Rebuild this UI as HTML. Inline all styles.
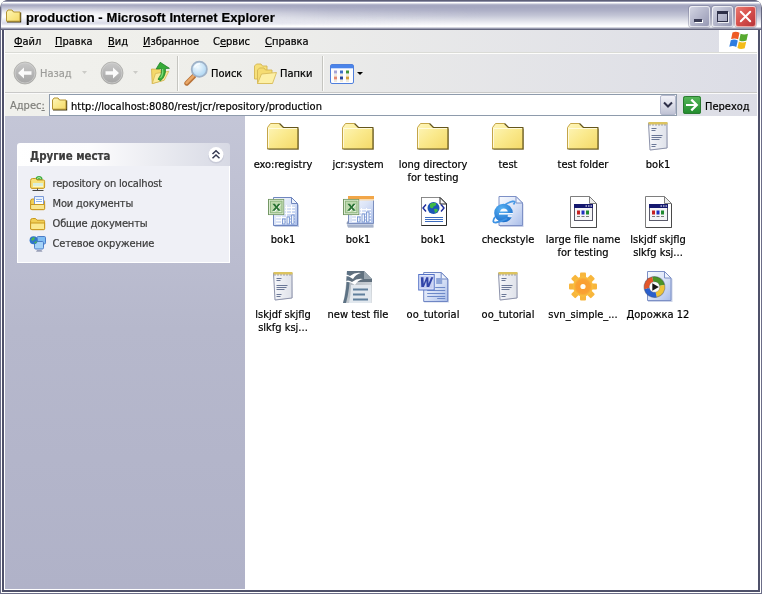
<!DOCTYPE html>
<html><head><meta charset="utf-8">
<style>
*{box-sizing:border-box;margin:0;padding:0}
html,body{width:762px;height:594px;overflow:hidden;background:#fff}
body{font-family:"DejaVu Sans Condensed","DejaVu Sans","Liberation Sans",sans-serif;font-size:11px;color:#000;position:relative;-webkit-text-stroke:.2px}
#win{will-change:transform;position:absolute;left:0;top:0;width:762px;height:594px;background:#efefea;border-radius:8px 8px 0 0;overflow:hidden}
#win>*,#tbar>*{position:absolute}
#tbar{left:0;top:0;width:762px;height:30px;z-index:6}
#title{left:0;top:0;width:762px;height:30px;border-radius:7px 7px 0 0;background:#64667e}
#tin{position:absolute;left:1px;top:0;width:760px;height:30px;border-radius:6px 6px 0 0;
 background:linear-gradient(to bottom,#5d5f78 0,#5d5f78 1px,#9092aa 1px,#9092aa 2px,#fff 2px,#fff 3px,#dcdde7 3px,#dcdde7 4px,#bbbdd0 4px,#a6a8c1 5.5px,#a5a7c0 7px,#aeb0c7 10.5px,#c3c5d6 15.5px,#dfe0e9 20.5px,#f6f6fa 24.5px,#fff 26px,#fff 27px,#d4d5df 27px,#d4d5df 28px,#9a9cb0 28px,#9a9cb0 29px,#64667e 29px)}
#tfade{left:2px;top:4px;width:520px;height:23px;background:linear-gradient(to right,rgba(255,255,255,.95) 0,rgba(255,255,255,.9) 90px,rgba(255,255,255,.55) 200px,rgba(255,255,255,.15) 330px,rgba(255,255,255,0) 480px);-webkit-mask-image:linear-gradient(to bottom,transparent 0,transparent 1px,rgba(0,0,0,.35) 4px,rgba(0,0,0,.8) 8px,#000 11px,#000 100%);mask-image:linear-gradient(to bottom,transparent 0,transparent 1px,rgba(0,0,0,.35) 4px,rgba(0,0,0,.8) 8px,#000 11px,#000 100%)}
#tfade2{left:2px;top:17px;width:420px;height:9px;background:linear-gradient(to bottom,rgba(205,207,225,0) 0,rgba(205,207,225,.75) 6px,rgba(205,207,225,.6) 7px,rgba(255,255,255,0) 9px);-webkit-mask-image:linear-gradient(to right,#000 0,#000 120px,transparent 100%);mask-image:linear-gradient(to right,#000 0,#000 120px,transparent 100%)}
#ttext{left:26px;top:10px;font-family:"Liberation Sans",sans-serif;font-weight:bold;font-size:13px;white-space:nowrap;line-height:15px;letter-spacing:.08px}
.tb{width:21px;height:21px;top:6px;border-radius:3px;border:1px solid rgba(255,255,255,.8);border-right-color:rgba(255,255,255,.45);border-bottom-color:rgba(255,255,255,.45);box-shadow:0 0 0 1px rgba(110,112,140,.4)}
#frame{z-index:5;pointer-events:none;left:0;top:20px;width:762px;height:574px;box-shadow:inset 0 0 0 1px #6c6e88,inset 0 0 0 2px #fff,inset 0 0 0 4px #4f516a,inset 0 0 0 5px #fff}
#menu{left:5px;top:30px;width:752px;height:22px;background:linear-gradient(to right,#f0f0ec 0,#efefeb 30%,#dcdde6 100%)}
#menu span{position:absolute;top:5px;white-space:nowrap}
#flag{left:719px;top:30px;width:38px;height:22px;background:#fff}
#msep{left:5px;top:52px;width:752px;height:2px;background:linear-gradient(to bottom,#dadbd6 0,#dadbd6 1px,#fdfdfb 1px)}
#tool{left:5px;top:54px;width:752px;height:38px;background:linear-gradient(to right,#f1f1ed 0,#eeeeea 30%,#dcdde6 100%)}
#tsep{left:5px;top:92px;width:752px;height:2px;background:linear-gradient(to bottom,#c9c9c8 0,#c9c9c8 1px,#fafafa 1px)}
#addr{left:5px;top:94px;width:752px;height:22px;background:linear-gradient(to right,#f0f0ec 0,#efefeb 30%,#dcdde6 100%)}
.vsep{width:2px;top:56px;height:35px;background:linear-gradient(to right,#c5c5c0 0,#c5c5c0 1px,#fbfbf9 1px)}
.tl{white-space:nowrap;line-height:13px}
#abox{left:49px;top:94px;width:628px;height:22px;background:#fff;border:1px solid #8e9bac}
#left{left:5px;top:116px;width:240px;height:473px;background:linear-gradient(to bottom,#c4c6d7 0,#b6b8cc 45%,#b0b2c8 100%)}
#right{left:245px;top:116px;width:512px;height:473px;background:#fff}
#phead{left:17px;top:143px;width:213px;height:23px;border-radius:3px 3px 0 0;background:linear-gradient(to right,#fff 0,#fcfcfd 35%,#d7d9e4 100%)}
#pbody{left:17px;top:166px;width:213px;height:97px;background:#eff0f6;border:1px solid #fff;border-top:none}
.pl{letter-spacing:-.15px;left:52.5px;color:#3c3c3c;white-space:nowrap;line-height:13px}
.lab{width:90px;text-align:center;line-height:13px}
.ic{width:32px;height:32px;overflow:visible}
.sic{width:16px;height:16px;overflow:visible}
</style></head><body>
<div id="win">
<svg width="0" height="0" style="position:absolute">
<defs>
<linearGradient id="gF" x1="0" y1="0" x2="1" y2="1"><stop offset="0" stop-color="#fef6bd"/><stop offset=".5" stop-color="#fae98c"/><stop offset="1" stop-color="#f4d968"/></linearGradient>
<linearGradient id="gP" x1="0" y1="0" x2="1" y2="1"><stop offset="0" stop-color="#f8fafe"/><stop offset=".5" stop-color="#dbe4f7"/><stop offset="1" stop-color="#a9bde9"/></linearGradient>
<linearGradient id="gN" x1="0" y1="0" x2="1" y2="0"><stop offset="0" stop-color="#f6f7fa"/><stop offset="1" stop-color="#dfe2ea"/></linearGradient>
<linearGradient id="gGr" x1="0" y1="0" x2="0" y2="1"><stop offset="0" stop-color="#c9c9c9"/><stop offset="1" stop-color="#a4a4a4"/></linearGradient>
<linearGradient id="gGo" x1="0" y1="0" x2="0" y2="1"><stop offset="0" stop-color="#58b85a"/><stop offset="1" stop-color="#1f8a2c"/></linearGradient>
<radialGradient id="gGear" cx=".5" cy=".5" r=".5"><stop offset="0" stop-color="#fb9a2c"/><stop offset=".7" stop-color="#f9a233"/><stop offset="1" stop-color="#f8c543"/></radialGradient>
<linearGradient id="gOO" x1="0" y1="0" x2="1" y2="1"><stop offset="0" stop-color="#a2abb4"/><stop offset="1" stop-color="#dde1e5"/></linearGradient>
<radialGradient id="gLens" cx=".4" cy=".35" r=".7"><stop offset="0" stop-color="#f2fafe"/><stop offset="1" stop-color="#a9d3f2"/></radialGradient>
<radialGradient id="gIE" cx=".4" cy=".3" r=".8"><stop offset="0" stop-color="#5ab4f4"/><stop offset="1" stop-color="#1668c8"/></radialGradient>

<symbol id="folder" viewBox="0 0 32 32">
 <path d="M2,8 L5,4 L13,4 L17,8 L32,8 L32,29.100 L2,29.100 Z" fill="#8a7a3a" opacity=".45"/>
 <path d="M.5,6.500 L3.500,2.500 L12.500,2.500 L16.500,6.500 L31,6.500 L31,28 L.5,28 Z" fill="url(#gF)"/>
 <path d="M.5,28 L.5,6.500 L3.500,2.500 L12.500,2.500" fill="none" stroke="#c4a548" stroke-width="1"/>
 <path d="M1.500,26.500 L1.500,7.500 L16,7.500 L30,7.500" fill="none" stroke="#fffce6" stroke-width="1" opacity=".85"/>
 <path d="M12.500,2.500 L16.500,6.500 L31,6.500 L31,28 L.5,28" fill="none" stroke="#65561c" stroke-width="1.200" stroke-linejoin="round"/>
</symbol>

<symbol id="note" viewBox="0 0 32 32">
 <g transform="translate(-6.500 0)">
 <path d="M14,2.500 L32.500,2.500 L33.500,27 L16,29.500 Z" fill="#b9bccb" opacity=".55" transform="translate(-1,0)"/>
 <path d="M13.500,2 L32,2 L32,27 L15,29 Z" fill="url(#gN)" stroke="#8d93ab" stroke-width="1" transform="translate(-0.5,0)"/>
 <path d="M13,1 L32,1 L32,3.500 L13,3.500 Z" fill="#dcc35f"/>
 <path d="M14,4 h17" stroke="#5c5f76" stroke-width="1" stroke-dasharray="1 2"/>
 <g stroke="#6a7796" stroke-width="1">
  <path d="M16,7.500h5 M16,9.500h4 M16,14.500h11 M16,16.500h10 M16,18.500h8 M16,23.500h5 M16,25.500h4"/>
 </g>
 </g>
</symbol>

<symbol id="xbox" viewBox="0 0 17 17">
 <rect x=".5" y=".5" width="16" height="16" fill="#e4f0dc" stroke="#6f9460"/>
 <rect x="2" y="2" width="13" height="13" fill="#bedaae"/>
 <rect x="2.500" y="2.500" width="12" height="12" fill="none" stroke="#8fb680"/>
 <path d="M4.500,5.200 h2.800 l1.500,2.200 l1.700,-2.200 h2.600 l-3,3.500 l3.200,3.700 h-2.800 l-1.700,-2.300 l-1.800,2.300 h-2.700 l3.200,-3.700 z" fill="#fff" transform="translate(.7,.7)"/>
 <path d="M4.500,5.200 h2.800 l1.500,2.200 l1.700,-2.200 h2.600 l-3,3.500 l3.200,3.700 h-2.800 l-1.700,-2.300 l-1.800,2.300 h-2.700 l3.200,-3.700 z" fill="#2a7434"/>
</symbol>

<symbol id="xls" viewBox="0 0 32 32">
 <path d="M7.5,2 L25,2 L32,9 L32,31 L7.5,31 Z" fill="#8fa3cf" opacity=".5"/>
 <path d="M6.5,1.5 L24.5,1.5 L30.5,7.5 L30.5,29.5 L6.5,29.5 Z" fill="url(#gP)" stroke="#6f86bf"/>
 <path d="M24.5,1.5 L24.5,7.5 L30.5,7.5 Z" fill="#eef3fc" stroke="#6f86bf" stroke-linejoin="round"/>
 <g stroke="#fff" stroke-width="1" opacity=".95"><path d="M9,21.5h19 M9,24.5h19 M9,27.5h19 M18,11.5h10 M18,14.5h10 M18,17.5h10 M14.5,20v8 M19.5,9v19 M24.5,9v19"/></g>
 <g fill="#eef3fc" stroke="#6d8ccc" stroke-width=".8"><rect x="15.500" y="23" width="2.500" height="5"/><rect x="20" y="21" width="2.500" height="7"/><rect x="24.500" y="19" width="2.500" height="9"/></g>
 <use href="#xbox" x="1" y="2.800" width="16.400" height="16.400"/>
</symbol>

<symbol id="xlt" viewBox="0 0 32 32">
 <path d="M4.5,27 L7,23 L31,23 L31.5,31.5 L6,31.5 Z" fill="#8d9bb8"/>
 <path d="M5,28.5 h26 M5.5,30 h25.5" stroke="#cfd8ea" stroke-width=".8"/>
 <path d="M6.5,.5 L31.5,.5 L31.5,27.5 L6.5,27.5 Z" fill="url(#gP)" stroke="#7c8fbe"/>
 <rect x="6" y="0" width="26" height="3" fill="#f2a648"/>
 <rect x="6" y="3" width="26" height="1.500" fill="#f9dcb0"/>
 <g stroke="#fff" stroke-width="1" opacity=".95"><path d="M10,19.5h19 M10,22.5h19 M10,25.5h19 M18,13.5h11 M18,16.5h11 M14.500,19v7 M19.5,12v14 M24.5,12v14"/></g>
 <g fill="#eef3fc" stroke="#6d8ccc" stroke-width=".8"><rect x="15.500" y="21" width="2.500" height="5"/><rect x="20" y="18" width="2.500" height="8"/><rect x="24.500" y="16" width="2.500" height="10"/></g>
 <use href="#xbox" x="1" y="2.800" width="16.400" height="16.400"/>
</symbol>

<symbol id="xml" viewBox="0 0 32 32">
 <path d="M4.500,1.500 L23,1.500 L29.500,8 L29.500,29.500 L4.500,29.500 Z" fill="#fff" stroke="#2a2a2a"/>
 <path d="M4.500,29 L4.500,1.500 L23,1.500" fill="none" stroke="#8a8a8a"/>
 <path d="M23,1.500 L23,8 L29.500,8 Z" fill="#f2f2f2" stroke="#2a2a2a" stroke-linejoin="round"/>
 <circle cx="16.500" cy="12" r="6" fill="#1c56b8"/>
 <path d="M13,8 q3,-2 6,-1 q1,2 -1,3 q-2,0 -2,2 q-2,1 -3,-1 z M17,13 q3,-1 4,1 q-1,3 -3,3 z" fill="#3fb846"/>
 <path d="M9,8.500 L6,12 L9,15.500 M24,8.500 L27,12 L24,15.500" fill="none" stroke="#1c2a9a" stroke-width="1.400"/>
 <path d="M8,21.500h18 M8,23.500h18 M8,25.500h18" stroke="#3d6dc0" stroke-width="1"/>
</symbol>

<symbol id="iedoc" viewBox="0 0 32 32">
 <path d="M8,1.500 L25,1.500 L31.500,8 L31.500,31 L8,31 Z" fill="#8fa0cf" opacity=".5"/>
 <path d="M7,.5 L24,.5 L30.500,7 L30.500,29.500 L7,29.500 Z" fill="url(#gP)" stroke="#7d90c6"/>
 <path d="M24,.5 L24,7 L30.500,7 Z" fill="#eef3fc" stroke="#7d90c6" stroke-linejoin="round"/>
 <path d="M21.500,8.500 Q24.500,4.500 20,5.500 Q16,6.500 12,9.500" fill="none" stroke="#4a9ae6" stroke-width="1.800"/>
 <circle cx="11.500" cy="17" r="9.300" fill="url(#gIE)"/>
 <path d="M8,15.600 Q8.800,12.600 11.800,12.600 Q15,12.600 15.800,15.600 Z" fill="#f4f9fe"/>
 <path d="M7,17 H21 V18.600 H7 Z" fill="#f4f9fe"/>
 <path d="M16,18.600 H21 Q20.600,20.400 19.800,21.600 L15.500,20.800 Z" fill="#dfeafb"/>
 <path d="M3,21 Q-1,27 4,26.500 Q9,26 15,22.500" fill="none" stroke="#3f93e4" stroke-width="1.800"/>
</symbol>

<symbol id="gen" viewBox="0 0 32 32">
 <path d="M3.500,.5 L22.500,.5 L29.500,7.500 L29.500,31.500 L3.500,31.500 Z" fill="#fff" stroke="#7e7e7e"/>
 <path d="M29.500,8 L29.500,31.500 L4,31.500" fill="none" stroke="#4a4a4a"/>
 <path d="M22.500,.5 L22.500,7.500 L29.500,7.500 Z" fill="#ececec" stroke="#7e7e7e" stroke-linejoin="round"/>
 <rect x="7.500" y="8.500" width="18" height="16" fill="#f4f4f6" stroke="#5a5a6a"/>
 <rect x="7" y="8" width="19" height="4" fill="#14186e"/>
 <path d="M18.500,10h1.500 M21,10h1.500 M23.500,10h1.500" stroke="#fff" stroke-width="1.200"/>
 <rect x="10" y="14.500" width="3" height="4" fill="#c62020"/><rect x="14.500" y="14.500" width="3" height="4" fill="#2030c0"/><rect x="19" y="14.500" width="3" height="4" fill="#208a30"/>
 <path d="M10,20.500h3 M14.500,20.500h3 M19,20.500h3" stroke="#7a7a7a"/>
</symbol>

<symbol id="oo" viewBox="0 0 32 32">
 <path d="M5,0 L22,0 L30,8 L30,32 L1,32 Q4,20 5,0 Z" fill="url(#gOO)"/>
 <path d="M5,0 L22,0 L30,8 L30,11 L4.500,11 Z" fill="#60707e"/>
 <path d="M22,0 L30,8 L22,8 Z" fill="#9aa6b0"/>
 <path d="M5,0 Q5,20 1,32 L4,32 Q8,18 8,0 Z" fill="#5d7284"/>
 <path d="M9,14 L29,14 L29,32 L7,32 Q9,24 9,14 Z" fill="#e2e8ee"/>
 <path d="M0,5 q4,-3 8,0 q5,-4 11,-3 q-5,1 -8,6 q-5,-4 -11,-3 z M2,11 q4,-3 8,0 q5,-4 11,-3 q-5,1 -8,6 q-5,-4 -11,-3 z" fill="#fff"/>
 <path d="M11,18.500h15 M11,23.500h12 M11,28.500h15" stroke="#5f7f9c" stroke-width="2"/>
</symbol>

<symbol id="doc" viewBox="0 0 32 32">
 <g transform="translate(-.8 0)">
 <path d="M8,2 L26,2 L33,9 L33,31.500 L8,31.500 Z" fill="#8fa0cf" opacity=".45"/>
 <path d="M7.500,1.500 L25,1.500 L31.500,8 L31.500,30.500 L7.500,30.500 Z" fill="url(#gP)" stroke="#6f86c4"/>
 <path d="M25,1.500 L25,8 L31.500,8 Z" fill="#eef3fc" stroke="#6f86c4" stroke-linejoin="round"/>
 <rect x="20" y="7" width="6" height="6" fill="#8ea5d8"/>
 <g stroke="#6d89c8" stroke-width="1"><path d="M19,16.500h10 M11,19.500h18 M11,22.500h18 M11,25.500h18 M21,27.500h8"/></g>
 <rect x="2.500" y="3.500" width="15.500" height="15.500" fill="#e2e7fa" stroke="#5674c8"/>
 <rect x="4" y="5" width="12.500" height="12.500" fill="#c6cff2"/>
 <path d="M4.500,6.500 h3 l.3,7 l3,-7 h2.400 l.2,7 l3,-7 h2.600 l-4.800,10.500 h-3 l-.3,-6.500 l-2.900,6.500 h-3 z" fill="#3144a8" transform="translate(.8,.3) scale(.86 .92)"/>
 </g>
</symbol>

<symbol id="gear" viewBox="0 0 32 32">
 <g transform="translate(16 15.500)">
  <g fill="#f8b63c"><rect x="-3" y="-14" width="6" height="28" rx="1"/><rect x="-3" y="-14" width="6" height="28" rx="1" transform="rotate(45)"/><rect x="-3" y="-14" width="6" height="28" rx="1" transform="rotate(90)"/><rect x="-3" y="-14" width="6" height="28" rx="1" transform="rotate(135)"/></g>
  <circle r="10" fill="url(#gGear)"/>
  <circle r="2.600" fill="#fffdf4"/>
 </g>
</symbol>

<symbol id="wmp" viewBox="0 0 32 32">
 <path d="M6,1.500 L23.500,1.500 L30.500,8 L30.500,31 L6,31 Z" fill="#8fa0cf" opacity=".45"/>
 <path d="M5.500,.5 L22.500,.5 L29,7 L29,29.500 L5.500,29.500 Z" fill="url(#gP)" stroke="#7d90c6"/>
 <path d="M22.500,.5 L22.500,7 L29,7 Z" fill="#eef3fc" stroke="#7d90c6" stroke-linejoin="round"/>
 <g transform="translate(12.500 16) rotate(-12)">
  <path d="M0,0 L-10.500,0 A10.500,10.500 0 0 1 0,-10.500 Z" fill="#e4572a"/>
  <path d="M0,0 L0,-10.500 A10.500,10.500 0 0 1 10.500,0 Z" fill="#4c9427"/>
  <path d="M0,0 L10.500,0 A10.500,10.500 0 0 1 0,10.500 Z" fill="#eec437"/>
  <path d="M0,0 L0,10.500 A10.500,10.500 0 0 1 -10.500,0 Z" fill="#2a5fcc"/>
  <circle r="10.500" fill="none" stroke="#26324a" stroke-opacity=".35" stroke-width="1"/>
  <circle r="5.300" fill="#fbfbfb" stroke="#26324a" stroke-opacity=".3" stroke-width=".8"/>
 </g>
 <path d="M10.300,12.200 L16.800,16 L10.300,19.800 Z" fill="#151515"/>
</symbol>

<symbol id="sfolder" viewBox="0 0 16 16">
 <path d="M1,4.500 L2.500,2.500 L6.500,2.500 L8,4.500 L15.200,4.500 L15.200,14.400 L1,14.400 Z" fill="#3a3210"/>
 <path d="M.5,4 L2,2 L6,2 L7.500,4 L14,4 L14,13.200 L.5,13.200 Z" fill="url(#gF)" stroke="#b59535" stroke-width="1"/>
</symbol>
</defs>
</svg>
<div id="frame"></div><div id="tbar"><div id="title"><div id="tin"></div></div><div id="tfade"></div><div id="tfade2"></div>
<svg class="sic" style="left:6px;top:8px" width="16" height="16"><use href="#sfolder" width="16" height="16"/></svg>
<div id="ttext">production - Microsoft Internet Explorer</div>
<div class="tb" style="left:689px;background:linear-gradient(135deg,#d2d4e2 0,#b4b6cb 50%,#9799b4 100%)"></div>
<div style="left:694px;top:19px;width:8px;height:3px;background:#3a3c55;box-shadow:1px 1px 0 #fff"></div>
<div class="tb" style="left:712px;background:linear-gradient(135deg,#d2d4e2 0,#b4b6cb 50%,#9799b4 100%)"></div>
<div style="left:717px;top:11px;width:11px;height:11px;border:1px solid #2e3048;border-top-width:3px;box-shadow:1px 1px 0 rgba(255,255,255,.8)"></div>
<div class="tb" style="left:735px;background:linear-gradient(135deg,#e87b72 0,#d9524d 45%,#b8353a 100%)"></div>
<svg style="left:735px;top:6px" width="21" height="21"><path d="M5.800,5.800 L15.200,15.200 M15.200,5.800 L5.800,15.200" stroke="#fff" stroke-width="2" stroke-linecap="round"/></svg></div>
<div id="menu"><span style="left:9px"><u>Ф</u>айл</span><span style="left:50px"><u>П</u>равка</span><span style="left:103px"><u>В</u>ид</span><span style="left:138px"><u>И</u>збранное</span><span style="left:208px">С<u>е</u>рвис</span><span style="left:260px"><u>С</u>правка</span></div>
<div id="flag"></div>
<svg style="left:727px;top:31px" width="24" height="20" viewBox="0 0 24 20"><path d="M5.500,1.500 q3.500,-1.500 7,.3 l-1.400,6.500 q-3.500,-1.700 -7,-.2 z" fill="#ee5a24"/><path d="M13.600,2.800 q3.500,1.600 7.400,0 l-1.500,6.800 q-3.700,1.500 -7.300,-.2 z" fill="#57a92f"/><path d="M3.800,9.200 q3.500,-1.500 7,.3 l-1.500,6.500 q-3.400,-1.700 -7,-.2 z" fill="#2f7de0"/><path d="M11.900,10.500 q3.500,1.700 7.300,.2 l-1.500,6.600 q-3.800,1.500 -7.300,-.2 z" fill="#f5bc19"/></svg>
<div id="msep"></div><div id="tool"></div><div id="tsep"></div><div id="addr"></div>
<svg style="left:13px;top:61px" width="24" height="24" viewBox="0 0 24 24"><circle cx="12" cy="12" r="11" fill="url(#gGr)" stroke="#a8a8a5" stroke-width=".9" stroke-opacity=".8"/><circle cx="12" cy="12" r="10" fill="none" stroke="#d2d2d0" stroke-width="1" stroke-opacity=".7"/><path d="M5,12 L11,6.500 L11,10.300 L18.500,10.300 L18.500,13.700 L11,13.700 L11,17.500 Z" fill="#fbfbfb"/></svg>
<div class="tl" style="left:40px;top:67px;color:#9d9d9a">Назад</div>
<svg style="left:82px;top:71px" width="5" height="3"><path d="M0,0h5L2.500,3z" fill="#cbcbc7"/></svg>
<svg style="left:100px;top:61px" width="24" height="24" viewBox="0 0 24 24"><circle cx="12" cy="12" r="11" fill="url(#gGr)" stroke="#a8a8a5" stroke-width=".9" stroke-opacity=".8"/><circle cx="12" cy="12" r="10" fill="none" stroke="#d2d2d0" stroke-width="1" stroke-opacity=".7"/><path d="M19,12 L13,6.500 L13,10.300 L5.500,10.300 L5.500,13.700 L13,13.700 L13,17.500 Z" fill="#fbfbfb"/></svg>
<svg style="left:133px;top:71px" width="5" height="3"><path d="M0,0h5L2.500,3z" fill="#cbcbc7"/></svg>
<svg style="left:149px;top:60px" width="24" height="26" viewBox="0 0 24 26"><path d="M2.500,9 L10.500,9.300 L12.500,11 L16,11.200 L15,20 L3.200,23.600 Z" fill="#f4d86a" stroke="#d0ae48" stroke-width=".8"/><path d="M3.200,23.600 L6.500,13.500 L19.800,11.300 L15.200,20.300 Z" fill="#fbeb9c" stroke="#d6b854" stroke-width=".8"/><path d="M11.200,2.300 L20.400,8.300 L16.400,8.500 Q17.200,15.800 11.600,20.800 L9,19.200 Q13.400,14.400 12.600,8.700 L7.200,8.900 Z" fill="#36ab38" stroke="#1e8128" stroke-width=".8" stroke-linejoin="round"/><path d="M13.500,9 Q14.500,14 11.500,18" fill="none" stroke="#7fdc78" stroke-width="1.200"/></svg>
<div class="vsep" style="left:177px"></div>
<svg style="left:183px;top:60px" width="26" height="26" viewBox="0 0 26 26"><path d="M10.500,16.500 L3.800,23.200" stroke="#b9743a" stroke-width="5" stroke-linecap="round"/><path d="M10.300,16.200 L3.600,22.900" stroke="#eaa868" stroke-width="2.600" stroke-linecap="round"/><circle cx="16.300" cy="9.200" r="7.600" fill="url(#gLens)" stroke="#9fb2c8" stroke-width="1.800"/><path d="M11.500,7.500 Q13,4 17,3.800" fill="none" stroke="#fff" stroke-width="1.600" opacity=".8"/></svg>
<div class="tl" style="left:211px;top:67px">Поиск</div>
<svg style="left:253px;top:62px" width="25" height="24" viewBox="0 0 25 24"><path d="M1.500,4 L3.500,2 L8,2 L9.500,4 L14,4 L14,17 L1.500,17 Z" fill="#f6e07a" stroke="#d4b654" stroke-width=".9"/><path d="M4.500,21.500 L4.500,8 L6.500,6 L11,6 L12.500,8 L19,8 L19,21.500 Z" fill="#f5dc72" stroke="#d4b654" stroke-width=".9"/><path d="M4.500,21.500 L8.500,12 L23.500,10.500 L19.500,21.500 Z" fill="#fdf0a6" stroke="#d8bc5c" stroke-width=".9"/></svg>
<div class="tl" style="left:280px;top:67px">Папки</div>
<div class="vsep" style="left:322px"></div>
<svg style="left:330px;top:64px" width="24" height="20" viewBox="0 0 24 20"><rect x=".5" y=".5" width="23" height="19" rx="1.500" fill="#fdfdfe" stroke="#4f7fdc"/><path d="M1,1 h22 v3.300 h-22 z" fill="#4a84ea"/><rect x="4" y="6.500" width="3" height="3" fill="#a6a4d6"/><rect x="10" y="6.500" width="3" height="3" fill="#3f70c8"/><rect x="16" y="6.500" width="3" height="3" fill="#3f943c"/><rect x="4" y="12.500" width="3" height="3" fill="#e38a72"/><rect x="10" y="12.500" width="3" height="3" fill="#27459c"/><rect x="16" y="12.500" width="3" height="3" fill="#d6a23e"/><path d="M4,11h3 M10,11h3 M16,11h3 M4,17h3 M10,17h3 M16,17h3" stroke="#e2d6b8" stroke-width="1"/></svg>
<svg style="left:357px;top:72px" width="6" height="3"><path d="M0,0h6L3,3z" fill="#000"/></svg>
<div class="tl" style="left:10px;top:99px;color:#7f7f7b">Адрес<u>:</u></div>
<div id="abox"></div>
<svg class="sic" style="left:52px;top:96px" width="16" height="16"><use href="#sfolder" width="16" height="16"/></svg>
<div class="tl" style="left:71px;top:100px">http://localhost:8080/rest/jcr/repository/production</div>
<div style="left:660px;top:95px;width:16px;height:20px;border:1px solid #b4b8cc;border-radius:2px;background:linear-gradient(to bottom,#f2f2f8 0,#d6d8e4 60%,#bfc2d4 100%)"></div>
<svg style="left:663px;top:101px" width="10" height="8"><path d="M1,1.500 L5,5.500 L9,1.500" fill="none" stroke="#2e3048" stroke-width="2"/></svg>
<svg style="left:683px;top:96px" width="18" height="18" viewBox="0 0 18 18"><rect x="0" y="0" width="18" height="18" rx="2" fill="url(#gGo)"/><rect x=".5" y=".5" width="17" height="17" rx="2" fill="none" stroke="#2a7a30"/><path d="M3,9 h10 M8.300,3.600 L13.800,9 L8.300,14.400" fill="none" stroke="#fff" stroke-width="2.200"/></svg>
<div class="tl" style="left:705px;top:100px">Переход</div>
<div id="left"></div><div id="right"></div>
<div id="phead"></div><div id="pbody"></div>
<div class="tl" style="left:30px;top:150px;font-weight:bold;font-size:11.4px;color:#3c3c3c">Другие места</div>
<svg style="left:207px;top:146px" width="18" height="18" viewBox="0 0 18 18"><circle cx="9" cy="9.500" r="8" fill="#c9cbd8"/><circle cx="9" cy="8.500" r="7.500" fill="#fff"/><path d="M5.500,8 L9,4.800 L12.500,8 M5.500,12.300 L9,9 L12.500,12.300" fill="none" stroke="#363a52" stroke-width="1.500"/></svg>
<div class="pl" style="top:177px">repository on localhost</div>
<div class="pl" style="top:197px">Мои документы</div>
<div class="pl" style="top:217px">Общие документы</div>
<div class="pl" style="top:237px">Сетевое окружение</div>
<svg style="left:30px;top:175px" width="16" height="17" viewBox="0 0 16 17"><circle cx="9" cy="4.500" r="3.600" fill="#3fae42"/><path d="M7,3.500 q2,-2 4,0" stroke="#c4efb4" fill="none"/><path d="M.6,5.500 Q.6,3.500 2.500,3.500 L5.500,3.500 L7,5 L13.500,5 Q14.600,5 14.600,6.200 L14.600,12 Q14.600,13.400 13.300,13.400 L2,13.400 Q.6,13.400 .6,12 Z" fill="#f7e17a" stroke="#c8981f" stroke-linejoin="round"/><rect x="3" y="8" width="10" height="3" fill="#d9efe0"/><path d="M3,11.500h10" stroke="#fff6c0"/><path d="M7.500,13.500v1.500" stroke="#555"/><path d="M2.500,15.500h11" stroke="#444" stroke-width="1.200"/></svg>
<svg style="left:30px;top:195px" width="16" height="16" viewBox="0 0 16 16"><path d="M.6,6 Q.6,4 2.500,4 L5,4 L6,5.500 L13.500,5.500 Q14.600,5.500 14.600,6.500 L14.600,13.500 Q14.600,14.600 13.500,14.600 L1.800,14.600 Q.6,14.600 .6,13.500 Z" fill="#f1cf55" stroke="#c8981f" stroke-linejoin="round"/><path d="M4.500,1.500 h9 v10 h-9 z" fill="#fdfeff" stroke="#7c9ad6"/><path d="M6,4.500h6 M6,6.500h6" stroke="#8db4ee"/><path d="M5,3h8" stroke="#cfe0f8"/><path d="M.6,14 L.6,9.500 L14.600,9.500 L14.600,13.500 Q14.600,14.600 13.500,14.600 L1.800,14.600 Q.6,14.600 .6,13.500 Z" fill="#f9e690" stroke="#c8981f" stroke-linejoin="round"/></svg>
<svg style="left:30px;top:217px" width="16" height="14" viewBox="0 0 16 14"><path d="M.6,3.500 Q.6,1.500 2.500,1.500 L5.500,1.500 L7,3.200 L13.500,3.200 Q14.600,3.200 14.600,4.300 L14.600,11.500 Q14.600,12.600 13.500,12.600 L1.800,12.600 Q.6,12.600 .6,11.500 Z" fill="#f1cf55" stroke="#c8981f" stroke-linejoin="round"/><path d="M.6,12 L.6,6 L14.600,6 L14.600,11.500 Q14.600,12.600 13.500,12.600 L1.800,12.600 Q.6,12.600 .6,11.500 Z" fill="#fbe98f" stroke="#c8981f" stroke-linejoin="round"/></svg>
<svg style="left:29px;top:235px" width="18" height="18" viewBox="0 0 18 18"><rect x="8" y="1.500" width="8.500" height="7.500" rx="1.200" fill="#7fbdf2" stroke="#4a7cc8"/><rect x="5.500" y="6.500" width="9" height="7.500" rx="1.200" fill="#a4d2f8" stroke="#4a7cc8"/><path d="M8,15h4.500l1,1.800h-6.500z" fill="#9aa0b8"/><circle cx="4.600" cy="5.200" r="4" fill="#2f74cc"/><path d="M2,4.500 q1.500,-3 4,-2 q0,2 -2.500,3.500 z M5,7.500 q2,-.5 2.500,-2 q1,2 -1,3.200 z" fill="#4cb650"/></svg>
<svg class="ic" style="left:267px;top:121px" width="32" height="32"><use href="#folder" width="32" height="32"/></svg>
<div class="lab" style="left:238px;top:158px">exo:registry</div>
<svg class="ic" style="left:342px;top:121px" width="32" height="32"><use href="#folder" width="32" height="32"/></svg>
<div class="lab" style="left:313px;top:158px">jcr:system</div>
<svg class="ic" style="left:417px;top:121px" width="32" height="32"><use href="#folder" width="32" height="32"/></svg>
<div class="lab" style="left:388px;top:158px">long directory<br>for testing</div>
<svg class="ic" style="left:492px;top:121px" width="32" height="32"><use href="#folder" width="32" height="32"/></svg>
<div class="lab" style="left:463px;top:158px">test</div>
<svg class="ic" style="left:567px;top:121px" width="32" height="32"><use href="#folder" width="32" height="32"/></svg>
<div class="lab" style="left:538px;top:158px">test folder</div>
<svg class="ic" style="left:642px;top:121px" width="32" height="32"><use href="#note" width="32" height="32"/></svg>
<div class="lab" style="left:613px;top:158px">bok1</div>
<svg class="ic" style="left:267px;top:196px" width="32" height="32"><use href="#xls" width="32" height="32"/></svg>
<div class="lab" style="left:238px;top:233px">bok1</div>
<svg class="ic" style="left:342px;top:196px" width="32" height="32"><use href="#xlt" width="32" height="32"/></svg>
<div class="lab" style="left:313px;top:233px">bok1</div>
<svg class="ic" style="left:417px;top:196px" width="32" height="32"><use href="#xml" width="32" height="32"/></svg>
<div class="lab" style="left:388px;top:233px">bok1</div>
<svg class="ic" style="left:492px;top:196px" width="32" height="32"><use href="#iedoc" width="32" height="32"/></svg>
<div class="lab" style="left:463px;top:233px">checkstyle</div>
<svg class="ic" style="left:567px;top:196px" width="32" height="32"><use href="#gen" width="32" height="32"/></svg>
<div class="lab" style="left:538px;top:233px">large file name<br>for testing</div>
<svg class="ic" style="left:642px;top:196px" width="32" height="32"><use href="#gen" width="32" height="32"/></svg>
<div class="lab" style="left:613px;top:233px">lskjdf skjflg<br>slkfg ksj...</div>
<svg class="ic" style="left:267px;top:271px" width="32" height="32"><use href="#note" width="32" height="32"/></svg>
<div class="lab" style="left:238px;top:308px">lskjdf skjflg<br>slkfg ksj...</div>
<svg class="ic" style="left:342px;top:271px" width="32" height="32"><use href="#oo" width="32" height="32"/></svg>
<div class="lab" style="left:313px;top:308px">new test file</div>
<svg class="ic" style="left:417px;top:271px" width="32" height="32"><use href="#doc" width="32" height="32"/></svg>
<div class="lab" style="left:388px;top:308px">oo_tutorial</div>
<svg class="ic" style="left:492px;top:271px" width="32" height="32"><use href="#note" width="32" height="32"/></svg>
<div class="lab" style="left:463px;top:308px">oo_tutorial</div>
<svg class="ic" style="left:567px;top:271px" width="32" height="32"><use href="#gear" width="32" height="32"/></svg>
<div class="lab" style="left:538px;top:308px">svn_simple_...</div>
<svg class="ic" style="left:642px;top:271px" width="32" height="32"><use href="#wmp" width="32" height="32"/></svg>
<div class="lab" style="left:613px;top:308px">Дорожка 12</div>
</div></body></html>
